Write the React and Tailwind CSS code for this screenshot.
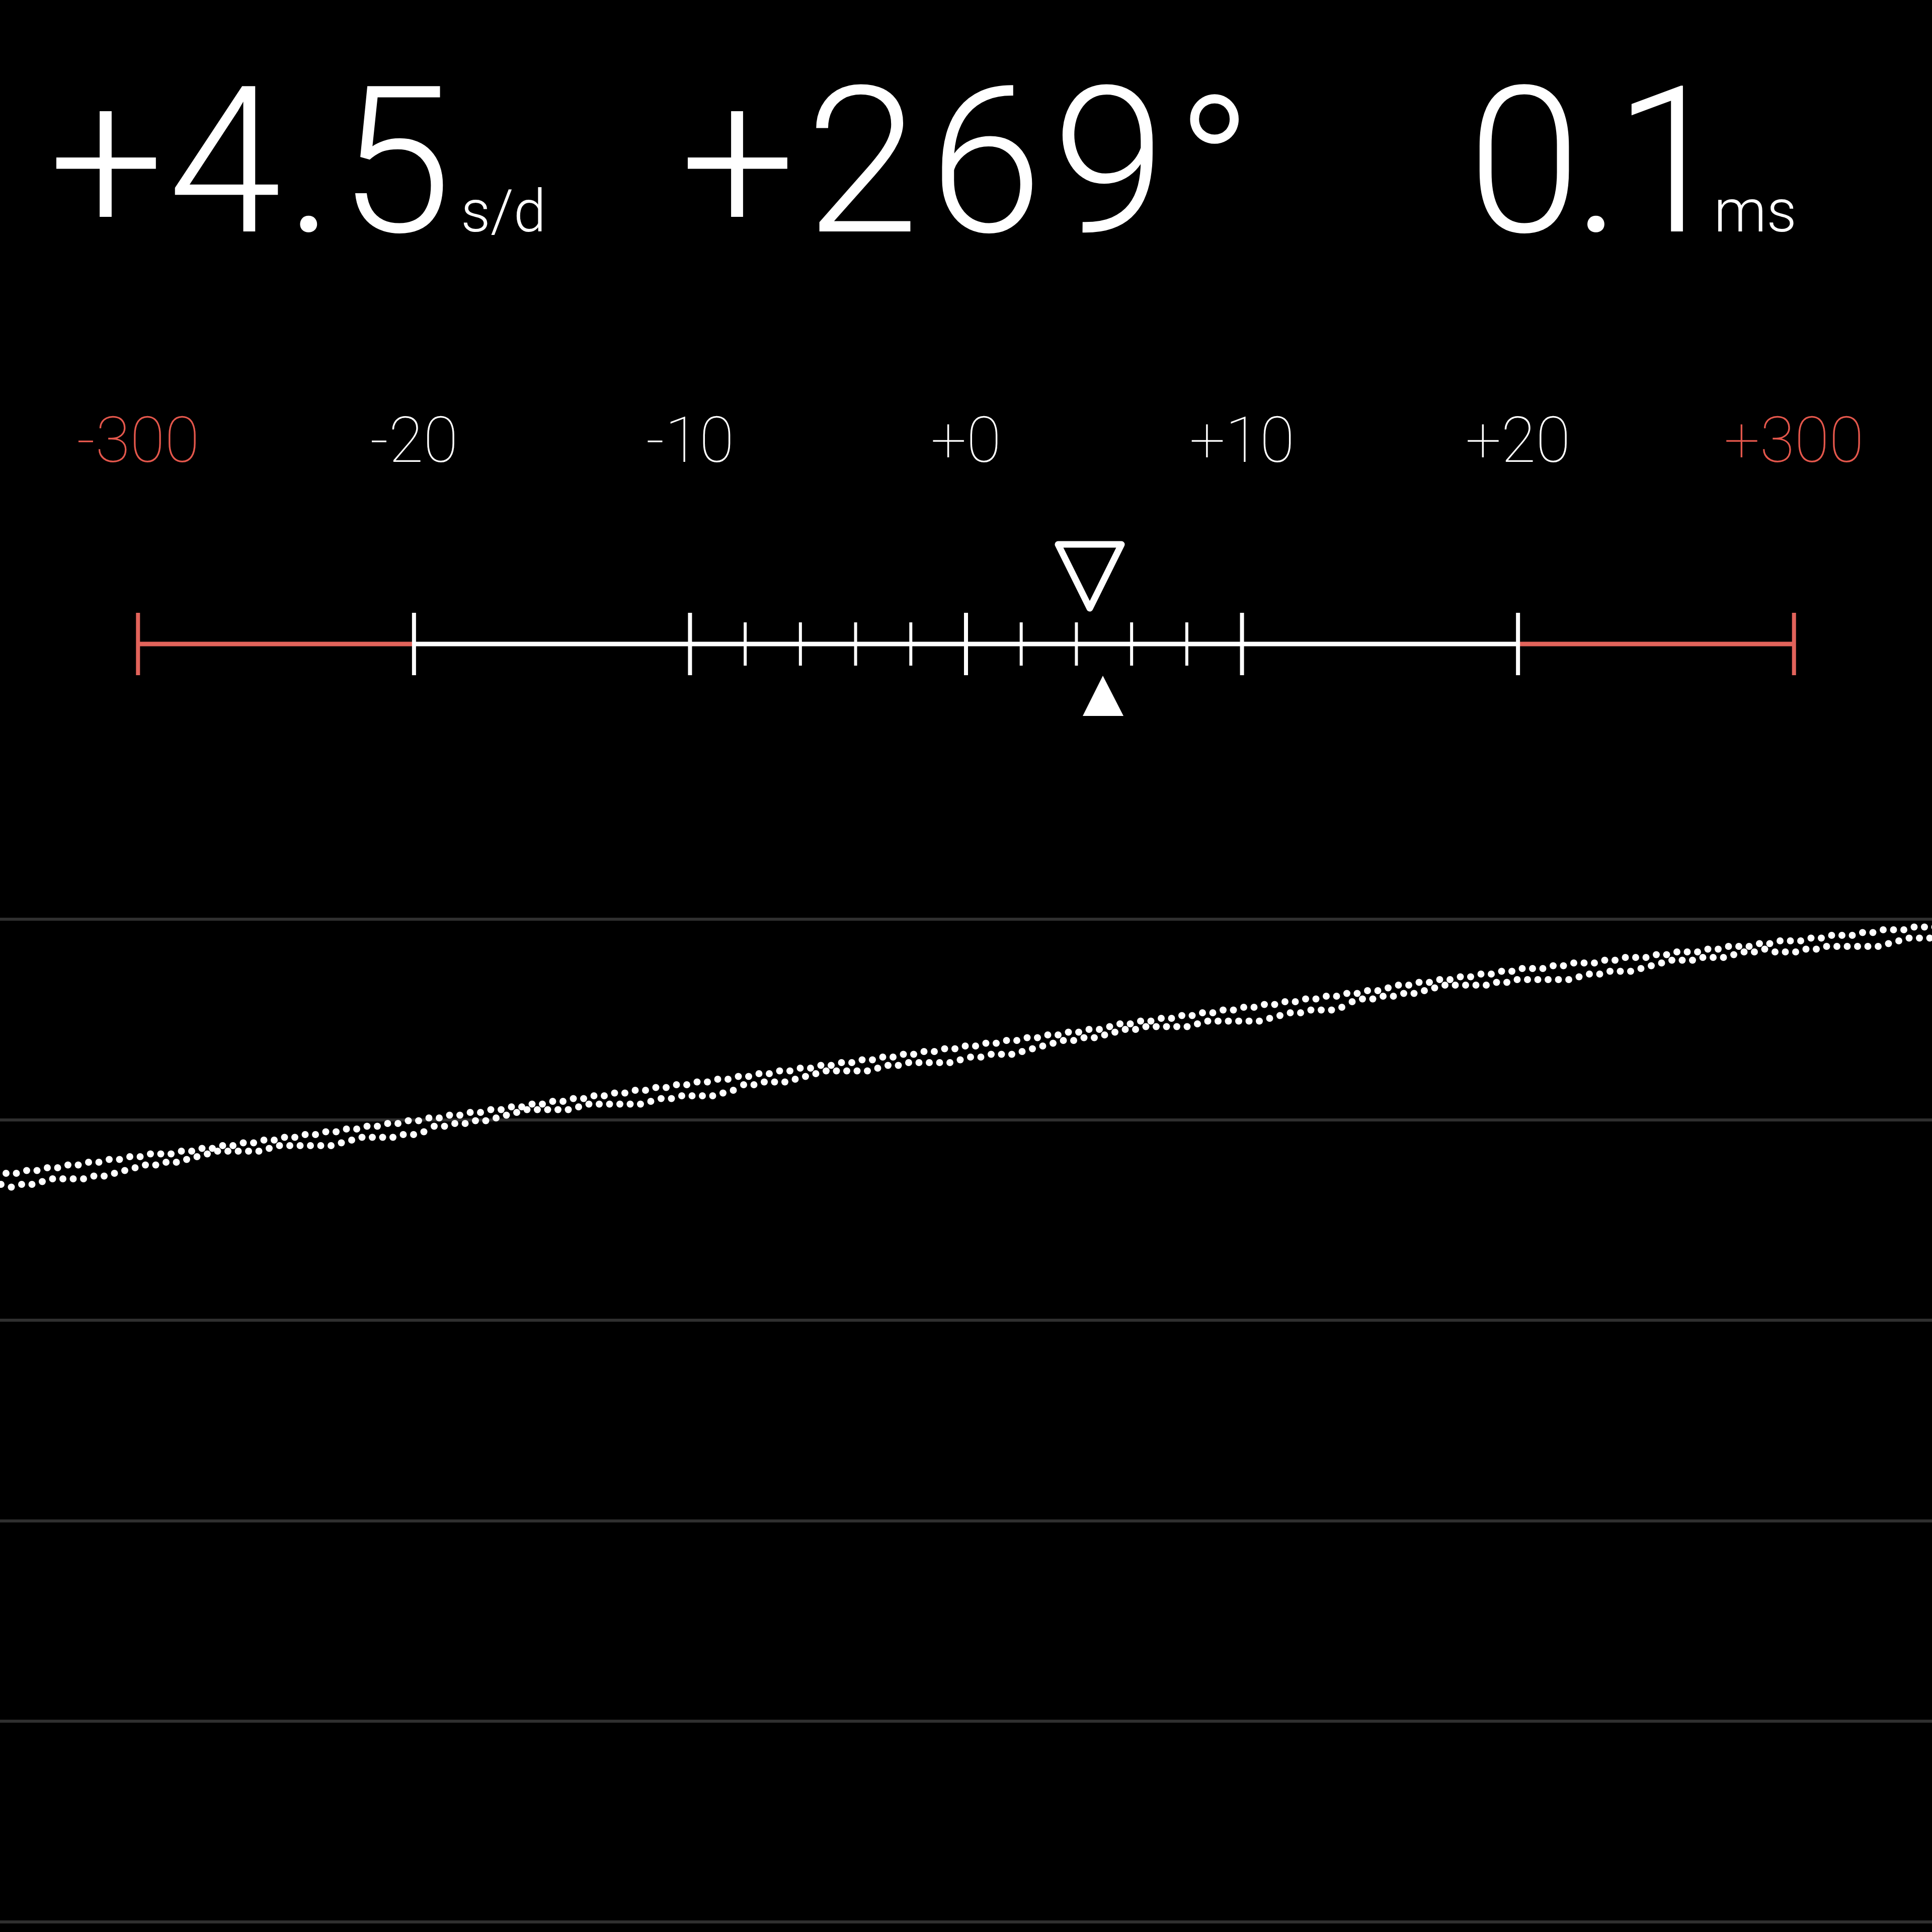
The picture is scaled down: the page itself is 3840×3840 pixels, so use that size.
import React from 'react';

const STEP = 548.571;
const LABELS = ['-300', '-20', '-10', '+0', '+10', '+20', '+300'];

// rough path of the beat trace, page coordinates
const TRACE = [
  [0, 2336],
  [1000, 2203],
  [1800, 2097],
  [3000, 1930],
  [3840, 1840],
];

const traceY = (x) => {
  for (let i = 0; i < TRACE.length - 1; i++) {
    const [x0, y0] = TRACE[i];
    const [x1, y1] = TRACE[i + 1];
    if (x <= x1) return y0 + ((x - x0) / (x1 - x0)) * (y1 - y0);
  }
  return TRACE[TRACE.length - 1][1];
};

const quant = (y) => Math.round(y / 5.5) * 5.5;

const buildDots = () => {
  const dots = [];
  for (let i = 0; i < 190; i++) {
    const xt = 12 + i * 20.5;
    const xb = 2 + i * 20.5;
    dots.push([xt, quant(traceY(xt))]);
    const off = 20 + 6 * Math.sin(xb * 0.0105) + 3 * Math.sin(xb * 0.041);
    dots.push([xb, quant(traceY(xb) + off)]);
  }
  return dots;
};

const DOTS = buildDots();

const Gauge = () => {
  const majors = LABELS.map((_, i) => 274.29 + STEP * i);
  const minors = [1, 2, 3, 4, 6, 7, 8, 9].map((k) => majors[2] + (STEP / 5) * k);
  const red = '#e2635b';

  return (
    <svg width="3840" height="380" viewBox="0 1060 3840 380" className="block">
      <line x1={majors[0]} y1="1280" x2={majors[1]} y2="1280" stroke={red} strokeWidth="9" />
      <line x1={majors[1]} y1="1280" x2={majors[5]} y2="1280" stroke="#fff" strokeWidth="9" />
      <line x1={majors[5]} y1="1280" x2={majors[6]} y2="1280" stroke={red} strokeWidth="9" />
      {majors.map((x, i) => (
        <line
          key={i}
          x1={x}
          y1="1218"
          x2={x}
          y2="1342"
          stroke={i === 0 || i === 6 ? red : '#fff'}
          strokeWidth="8"
        />
      ))}
      {minors.map((x, i) => (
        <line key={i} x1={x} y1="1237" x2={x} y2="1323" stroke="#fff" strokeWidth="6" />
      ))}
      <polygon
        points="2103,1082 2229,1082 2166,1209"
        fill="none"
        stroke="#fff"
        strokeWidth="13"
        strokeLinejoin="round"
      />
      <polygon points="2192,1343 2152,1423 2233,1423" fill="#fff" />
    </svg>
  );
};

export default function App() {
  return (
    <div className="w-[3840px] h-[3840px] bg-black text-white overflow-hidden flex flex-col font-['Roboto',sans-serif]">
      {/* readouts */}
      <div className="grid grid-cols-[1255px_1565px_1fr] pl-[97px] pt-[118px]">
        <div className="flex items-baseline">
          <span className="text-[406px] leading-none font-light tracking-[8px]">+4.5</span>
          <span className="ml-[10px] text-[116px] leading-none font-light">s/d</span>
        </div>
        <div className="flex items-baseline">
          <span className="text-[406px] leading-none font-light tracking-[20px]">
            +269<span className="leading-[0px] align-[-20px]">°</span>
          </span>
        </div>
        <div className="flex items-baseline">
          <span className="text-[406px] leading-none font-light tracking-[-16px]">0.1</span>
          <span className="-ml-[10px] text-[118px] leading-none font-light">ms</span>
        </div>
      </div>

      {/* scale labels */}
      <div className="grid grid-cols-7 mt-[288px] text-center text-[126px] leading-none font-thin">
        {LABELS.map((l, i) => (
          <span key={l} className={i === 0 || i === 6 ? 'text-[#e4574c]' : 'text-white'}>
            {l}
          </span>
        ))}
      </div>

      <div className="mt-[122px]">
        <Gauge />
      </div>

      {/* trace chart */}
      <div className="relative flex-1 flex flex-col gap-[392.5px] pt-[384px]">
        {[0, 1, 2, 3, 4, 5].map((i) => (
          <div key={i} className="h-[6px] bg-[#2f2f2f]" />
        ))}
        <svg
          width="3840"
          height="2400"
          viewBox="0 1440 3840 2400"
          className="absolute top-0 left-0"
        >
          {DOTS.map(([x, y], i) => (
            <circle key={i} cx={x} cy={y} r="7" fill="#fff" />
          ))}
        </svg>
      </div>
    </div>
  );
}
